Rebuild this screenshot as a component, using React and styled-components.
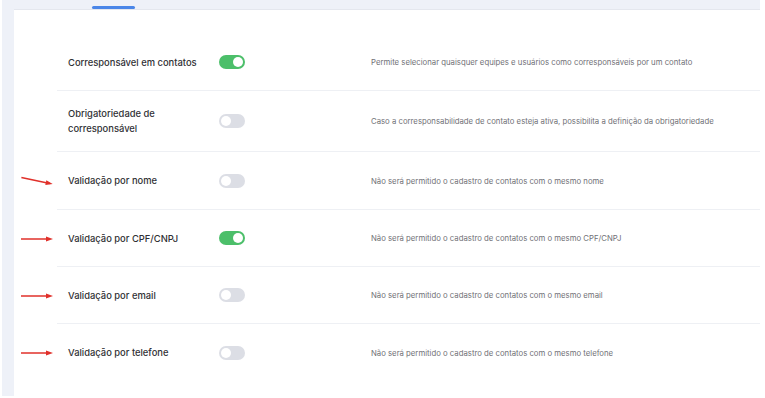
import React from "react";
import styled, { createGlobalStyle } from "styled-components";

//#region Styled Components
const GlobalStyle = createGlobalStyle`
  html, body {
    margin: 0;
    padding: 0;
    background: #ffffff;
  }
  body {
    font-family: Inter, "Noto Sans", "Liberation Sans", sans-serif;
  }
`;

const Frame = styled.div`
  margin: 0 5px 0 2px;
  height: 396px;
  box-sizing: border-box;
  background: #eef1f8;
  padding: 9px 0 0 12px;
  display: flex;
  flex-direction: column;
`;

const TabBar = styled.div`
  position: relative;
  height: 0;
`;

const TabIndicator = styled.div`
  position: absolute;
  left: 78px;
  top: -3px;
  width: 43px;
  height: 3px;
  border-radius: 2px;
  background: #4a86e8;
`;

const Panel = styled.div`
  flex: 1;
  background: #ffffff;
  border-top: 1px solid #e4e7ee;
  padding: 24px 0 0 6px;
`;

const Row = styled.div`
  display: flex;
  align-items: stretch;
`;

const ArrowCell = styled.div`
  flex: 0 0 37px;
  display: flex;
  align-items: center;
`;

const Content = styled.div`
  flex: 1;
  display: flex;
  align-items: center;
  box-sizing: border-box;
  min-height: ${p => p.$height || 57}px;
  padding-left: 11px;
  border-bottom: ${p => (p.$last ? "none" : "1px solid #eef0f4")};
`;

const Label = styled.div`
  flex: 0 0 151px;
  box-sizing: border-box;
  padding-right: 11px;
  font-size: 9.4px;
  font-weight: 500;
  line-height: 15px;
  color: #303034;
`;

const ToggleCell = styled.div`
  flex: 0 0 152px;
`;

const Toggle = styled.div`
  width: 26px;
  height: 14px;
  border-radius: 7px;
  background: ${p => (p.$on ? "#4cbf6a" : "#dcdee5")};
  position: relative;
  &::after {
    content: "";
    position: absolute;
    top: 2px;
    left: ${p => (p.$on ? "14px" : "2px")};
    width: 10px;
    height: 10px;
    border-radius: 50%;
    background: #ffffff;
  }
`;

const Description = styled.div`
  font-size: 7.75px;
  color: #707076;
  white-space: nowrap;
`;
//#endregion

const Arrow = ({ tilt }) => (
  <svg width="36" height="14" viewBox="0 0 36 14">
    <g transform={tilt ? "rotate(12 18 7)" : undefined}>
      <line x1="1" y1="7" x2="30" y2="7" stroke="#e0302a" strokeWidth="1.5" />
      <path d="M26 4.5 L33 7 L26 9.5 Z" fill="#e0302a" />
    </g>
  </svg>
);

const settings = [
  {
    label: "Corresponsável em contatos",
    on: true,
    text: "Permite selecionar quaisquer equipes e usuários como corresponsáveis por um contato",
  },
  {
    label: "Obrigatoriedade de corresponsável",
    on: false,
    height: 61,
    text: "Caso a corresponsabilidade de contato esteja ativa, possibilita a definição da obrigatoriedade",
  },
  {
    label: "Validação por nome",
    on: false,
    arrow: "tilt",
    height: 58,
    text: "Não será permitido o cadastro de contatos com o mesmo nome",
  },
  {
    label: "Validação por CPF/CNPJ",
    on: true,
    arrow: "flat",
    text: "Não será permitido o cadastro de contatos com o mesmo CPF/CNPJ",
  },
  {
    label: "Validação por email",
    on: false,
    arrow: "flat",
    text: "Não será permitido o cadastro de contatos com o mesmo email",
  },
  {
    label: "Validação por telefone",
    on: false,
    arrow: "flat",
    text: "Não será permitido o cadastro de contatos com o mesmo telefone",
  },
];

const App = () => (
  <>
    <GlobalStyle />
    <Frame>
      <TabBar>
        <TabIndicator />
      </TabBar>
      <Panel>
        {settings.map((s, i) => (
          <Row key={s.label}>
            <ArrowCell>{s.arrow && <Arrow tilt={s.arrow === "tilt"} />}</ArrowCell>
            <Content $height={s.height} $last={i === settings.length - 1}>
              <Label>{s.label}</Label>
              <ToggleCell>
                <Toggle $on={s.on} />
              </ToggleCell>
              <Description>{s.text}</Description>
            </Content>
          </Row>
        ))}
      </Panel>
    </Frame>
  </>
);

export default App;
